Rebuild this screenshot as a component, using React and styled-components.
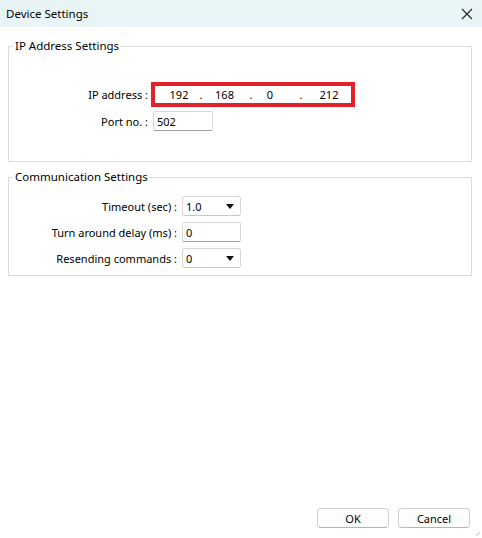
import React from 'react';
import styled, { createGlobalStyle } from 'styled-components';

const Global = createGlobalStyle`
  html, body { margin: 0; padding: 0; background: #fff; }
  body { font-family: "Noto Sans", "Liberation Sans", sans-serif; font-size: 11px; color: #000; }
`;

const Window = styled.div`
  width: 482px;
  height: 538px;
  display: flex;
  flex-direction: column;
  background: #fff;
  position: relative;
  overflow: hidden;
`;

const TitleBar = styled.div`
  height: 27px;
  flex: none;
  display: flex;
  align-items: center;
  justify-content: space-between;
  padding: 0 5px 0 6px;
  background: #e8f4f6;
  font-size: 11.5px;
`;

const CloseBtn = styled.div`
  width: 20px;
  height: 20px;
  display: flex;
  align-items: center;
  justify-content: center;
`;

const Body = styled.div`
  flex: 1;
  display: flex;
  flex-direction: column;
  padding: 12px 10px 0 8px;
  gap: 8px;
`;

const Group = styled.fieldset`
  margin: 0;
  border: 1px solid #dcdcdc;
  padding: ${p => p.$pad || '0'};
  height: ${p => p.$h}px;
  box-sizing: border-box;
  display: flex;
  flex-direction: column;
  gap: ${p => p.$gap || 6}px;
`;

const Legend = styled.legend`
  padding: 0 2px;
  margin-left: 4px;
  font-size: 11.5px;
  line-height: 14px;
`;

const Row = styled.div`
  display: flex;
  align-items: center;
`;

const Label = styled.div`
  width: ${p => p.$w}px;
  text-align: right;
  padding-right: 5px;
  box-sizing: border-box;
  white-space: nowrap;
`;

const IpBox = styled.div`
  width: 204px;
  height: 25px;
  box-sizing: border-box;
  border: 4px solid #e2212b;
  display: flex;
  align-items: center;
  padding-left: 10px;
  margin-left: -2px;
`;

const Octet = styled.span`
  width: ${p => p.$w}px;
  flex: none;
  display: flex;
  justify-content: center;
  white-space: nowrap;
`;

const Input = styled.div`
  width: ${p => p.$w}px;
  height: 20px;
  box-sizing: border-box;
  border: 1px solid #d7d7d7;
  border-bottom-color: #a0a0a0;
  border-radius: 2px;
  display: flex;
  align-items: center;
  padding-left: 3px;
  background: #fff;
`;

const Select = styled(Input)`
  justify-content: space-between;
  padding-right: 6px;
  border-radius: 3px;
  border-bottom-color: #c8c8c8;
`;

const Caret = styled.span`
  width: 0;
  height: 0;
  border-left: 4px solid transparent;
  border-right: 4px solid transparent;
  border-top: 5px solid #111;
`;

const Footer = styled.div`
  flex: none;
  display: flex;
  justify-content: flex-end;
  gap: 9px;
  padding: 0 12px 10px 0;
`;

const Button = styled.div`
  width: 72px;
  height: 20px;
  box-sizing: border-box;
  border: 1px solid #d0d0d0;
  border-bottom-color: #b5b5b5;
  border-radius: 4px;
  background: #fdfdfd;
  display: flex;
  align-items: center;
  justify-content: center;
`;

const Grip = styled.svg`
  position: absolute;
  right: 1px;
  bottom: 1px;
`;

const octets = [
  ['192', 28], ['.', 16], ['168', 31], ['.', 22], ['0', 16], ['.', 46], ['212', 10],
];

export default function App() {
  return (
    <Window>
      <Global />
      <TitleBar>
        <span>Device Settings</span>
        <CloseBtn>
          <svg width="12" height="12" viewBox="0 0 12 12">
            <path d="M1 1 L11 11 M11 1 L1 11" stroke="#222" strokeWidth="1.1" />
          </svg>
        </CloseBtn>
      </TitleBar>
      <Body>
        <Group $h={123} $pad="29px 0 0 0" $gap={4}>
          <Legend>IP Address Settings</Legend>
          <Row>
            <Label $w={144}>IP address :</Label>
            <IpBox>
              {octets.map(([t, w], i) => (
                <Octet key={i} $w={w}>{t}</Octet>
              ))}
            </IpBox>
          </Row>
          <Row>
            <Label $w={144}>Port no. :</Label>
            <Input $w={60}>502</Input>
          </Row>
        </Group>
        <Group $h={106} $pad="12px 0 0 0" $gap={6}>
          <Legend>Communication Settings</Legend>
          <Row>
            <Label $w={173}>Timeout (sec) :</Label>
            <Select $w={59}>1.0<Caret /></Select>
          </Row>
          <Row>
            <Label $w={173}>Turn around delay (ms) :</Label>
            <Input $w={59}>0</Input>
          </Row>
          <Row>
            <Label $w={173}>Resending commands :</Label>
            <Select $w={59}>0<Caret /></Select>
          </Row>
        </Group>
      </Body>
      <Footer>
        <Button>OK</Button>
        <Button>Cancel</Button>
      </Footer>
      <Grip width="6" height="6" viewBox="0 0 6 6">
        <path d="M5 1 L1 5" stroke="#bbb" strokeWidth="1" />
      </Grip>
    </Window>
  );
}
